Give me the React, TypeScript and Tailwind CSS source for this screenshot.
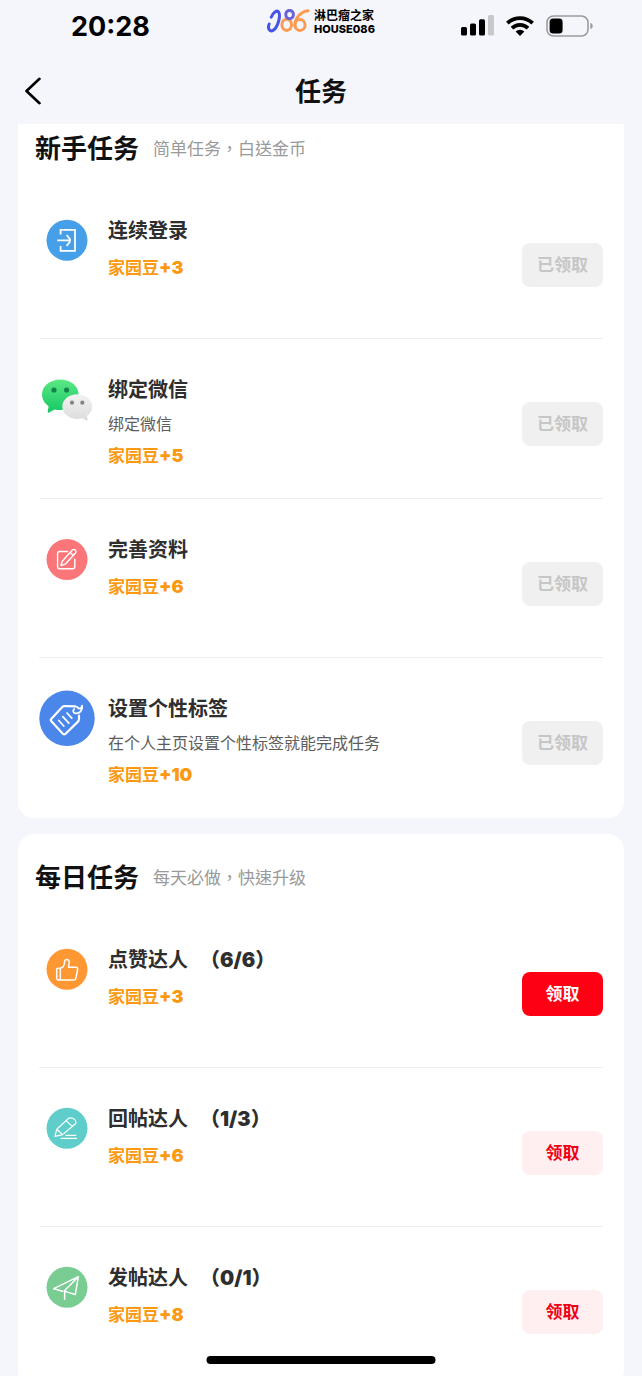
import type { ReactNode } from 'react';
import clsx from 'clsx';

type TaskStatus = 'claimed' | 'ready' | 'pending';

interface Task {
  id: string;
  title: string;
  progress?: string;
  desc?: string;
  reward: number;
  status: TaskStatus;
  icon: ReactNode;
}

const LoginIcon = () => (
  <svg viewBox="0 0 56 56" className="size-14 shrink-0" fill="none" stroke="#fff" strokeWidth="1.8" aria-hidden="true">
    <circle cx="28" cy="28.3" r="20.5" fill="#459fe9" stroke="none" />
    <path d="M21.6 22.6v-4.8H36V38.8H21.6V34" />
    <path d="M18.3 28.4H31M27.6 23l3 3.6q1.2 1.8 0 3.6l-3 3.6" />
  </svg>
);

const WechatIcon = () => (
  <svg viewBox="0 0 56 56" className="size-14 shrink-0" aria-hidden="true">
    <defs>
      <linearGradient id="wx-green" x1="0" y1="0" x2="0" y2="1">
        <stop offset="0" stopColor="#5be883" />
        <stop offset="1" stopColor="#16c765" />
      </linearGradient>
      <linearGradient id="wx-gray" x1="0" y1="0" x2="0" y2="1">
        <stop offset="0" stopColor="#f2f2f2" />
        <stop offset="1" stopColor="#dcdcdc" />
      </linearGradient>
    </defs>
    <path d="M21.3 8.6C11.2 8.6 3 15.2 3 23.6c0 4.8 2.5 8.8 6.6 11.7l-.9 5.3c-.1 1 .5 1.4 1.4.9l5.4-3.1c1.8.5 3.8.7 5.8.7 10.1 0 18.3-7.1 18.3-15.5S31.4 8.6 21.3 8.6z" fill="url(#wx-green)" />
    <circle cx="15" cy="19" r="2.6" fill="#11844a" />
    <circle cx="27.6" cy="19" r="2.6" fill="#11844a" />
    <path d="M38.3 23.2c-8.3 0-15 5.4-15 12.3s6.7 12.4 15 12.4c1.7 0 3.3-.2 4.8-.7l4.3 2.4c.8.4 1.3 0 1.2-.8l-.7-3.9c3.3-2.3 5.4-5.6 5.4-9.400 0-6.900-6.700-12.300-15-12.300z" fill="url(#wx-gray)" />
    <circle cx="33" cy="31.7" r="2.1" fill="#858585" />
    <circle cx="43.3" cy="31.7" r="2.1" fill="#858585" />
  </svg>
);

const EditIcon = () => (
  <svg viewBox="0 0 56 56" className="size-14 shrink-0" fill="none" stroke="#fff" strokeWidth="1.4" strokeLinecap="round" strokeLinejoin="round" aria-hidden="true">
    <circle cx="28" cy="28.5" r="20.5" fill="#fa7679" stroke="none" />
    <path d="M28.500 20.500H20.600a2 2 0 0 0-2 2v13.200a2 2 0 0 0 2 2h13.200a2 2 0 0 0 2-2v-7.500" />
    <path d="M23.200 30.200 33.400 19q1.400-1.200 2.900 0 1.400 1.500.2 3L26.200 33.200l-4.200 1.300zM31.200 21.400l3.200 3" />
  </svg>
);

const TagIcon = () => (
  <svg viewBox="0 0 56 56" className="size-14 shrink-0" fill="none" stroke="#fff" strokeWidth="2.2" strokeLinecap="round" strokeLinejoin="round" aria-hidden="true">
    <circle cx="28" cy="28.3" r="27.7" fill="#4b86ea" stroke="none" />
    <path d="M35.500 16.300 25.800 16q-1.500 0-2.500 1L12.400 28.700q-1.200 1.300 0 2.600l11.400 12.400q1.400 1.400 2.800 0L39 31.600q1-1 1-2.500v-3.600" />
    <path d="M35.500 16.300q3.300.2 4.200 2.300 3.300 0 3.400-3M43.100 15.600c.9 4.600-2.600 8.200-6.500 7.700-2.700-.4-3.200-3-1.200-4.200" strokeWidth="1.7" />
    <path d="m19.800 30.500 5 5.500M23.800 26.700l6 6.400M28 23l4.800 5.200" strokeWidth="1.7" />
  </svg>
);

const LikeIcon = () => (
  <svg viewBox="0 0 56 56" className="size-14 shrink-0" fill="none" stroke="#fff" strokeWidth="1.5" strokeLinejoin="round" aria-hidden="true">
    <circle cx="28" cy="28.3" r="20.5" fill="#ff9733" stroke="none" />
    <path d="M21.300 27.200h-2.200q-1.400 0-1.400 1.400v9q0 1.400 1.400 1.400h2.200zM21.300 27.200c3-.7 4.200-2.800 4.300-6.500 0-3 4.700-3.200 4.600.8 0 1.800-.5 3.200-.8 4.700h7.400q2.200.2 1.800 2.400l-1.700 8.500q-.4 1.900-2.300 1.900H21.300" />
  </svg>
);

const ReplyIcon = () => (
  <svg viewBox="0 0 56 56" className="size-14 shrink-0" fill="none" stroke="#fff" strokeWidth="1.2" strokeLinecap="round" strokeLinejoin="round" aria-hidden="true">
    <circle cx="28" cy="28.3" r="20.5" fill="#5fcdc9" stroke="none" />
    <path d="M16 36.300 17.800 29.200 29.200 18.600q3.500-2 6.200.8 2.600 2.500.8 4.600L23.600 34.600zM17.800 29.200l5.800 5.400M27 20.600l6.400 5.800" />
    <path d="M27 35.400h9.800M22 38.400h15.500" />
  </svg>
);

const PostIcon = () => (
  <svg viewBox="0 0 56 56" className="size-14 shrink-0" fill="none" stroke="#fff" strokeWidth="1.5" strokeLinecap="round" strokeLinejoin="round" aria-hidden="true">
    <circle cx="28" cy="28.3" r="20.5" fill="#79cc92" stroke="none" />
    <path d="M23.500 32.300 14.800 29.700 39.300 17.700 36.300 35.600 25.600 32.300v8M39.300 17.700 25.200 32" />
  </svg>
);

const noviceTasks: Task[] = [
  { id: 'login', title: '连续登录', reward: 3, status: 'claimed', icon: <LoginIcon /> },
  { id: 'wechat', title: '绑定微信', desc: '绑定微信', reward: 5, status: 'claimed', icon: <WechatIcon /> },
  { id: 'profile', title: '完善资料', reward: 6, status: 'claimed', icon: <EditIcon /> },
  { id: 'tags', title: '设置个性标签', desc: '在个人主页设置个性标签就能完成任务', reward: 10, status: 'claimed', icon: <TagIcon /> },
];

const dailyTasks: Task[] = [
  { id: 'like', title: '点赞达人', progress: '6/6', reward: 3, status: 'ready', icon: <LikeIcon /> },
  { id: 'reply', title: '回帖达人', progress: '1/3', reward: 6, status: 'pending', icon: <ReplyIcon /> },
  { id: 'post', title: '发帖达人', progress: '0/1', reward: 8, status: 'pending', icon: <PostIcon /> },
];

function StatusBar() {
  return (
    <div className="grid h-[58px] grid-cols-[1fr_auto_1fr] items-center pb-[6px]">
      <time className="pt-[2px] pl-[71px] text-[27px] leading-8 font-bold text-black">20:28</time>

      <div className="mb-2 flex items-center gap-1">
        <svg width="43" height="26" viewBox="0 0 43 26" fill="none" strokeWidth="3" strokeLinecap="round" aria-hidden="true">
          <path d="M4.200 8.200C6 3.500 10 .8 11.600 3c2.400 3.600-.8 15-5 18-3.800 2.600-6.400-1.600-4.400-6" stroke="#4653e6" />
          <ellipse cx="19.700" cy="15.800" rx="4.800" ry="5.600" stroke="#fb9a50" />
          <ellipse cx="22.600" cy="5.600" rx="3.800" ry="4.200" stroke="#6a62d8" />
          <path d="M41 1.800C34 2.600 27.900 9 27.900 16.200" stroke="#fb9a50" />
          <ellipse cx="33" cy="16" rx="5.100" ry="5.400" stroke="#fb9a50" />
        </svg>
        <div className="flex flex-col text-black">
          <span className="text-[12px] leading-[14px] font-bold">淋巴瘤之家</span>
          <span className="text-[11px] leading-[12px] font-extrabold">HOUSE086</span>
        </div>
      </div>

      <div className="flex items-center justify-end gap-3 pr-12">
        <svg width="33" height="22" viewBox="0 0 33 22" aria-hidden="true">
          <rect x="0" y="12" width="6" height="8.5" rx="1.6" />
          <rect x="9" y="8.5" width="6" height="12" rx="1.6" />
          <rect x="18" y="4.3" width="6" height="16.2" rx="1.6" />
          <rect x="27" y="0" width="6" height="20.5" rx="1.6" fill="#c7c8cb" />
        </svg>
        <svg width="28" height="22" viewBox="0 0 28 22" fill="none" stroke="#000" strokeWidth="3.8" aria-hidden="true">
          <path d="M1.400 8.200a18 18 0 0 1 25.200 0" />
          <path d="M6 13.200a11.400 11.400 0 0 1 16 0" />
          <path d="M14 21 9.600 16.600a6.400 6.400 0 0 1 8.800 0z" fill="#000" stroke="none" />
        </svg>
        <svg width="48" height="22" viewBox="0 0 48 22" aria-hidden="true">
          <rect x="1" y="1" width="41" height="20" rx="6.5" fill="none" stroke="#9b9ca0" strokeWidth="1.6" />
          <rect x="3.6" y="3.6" width="13" height="14.8" rx="3.5" />
          <path d="M44.300 7.800q2.500 1 2.500 3.200t-2.500 3.200z" fill="#9b9ca0" />
        </svg>
      </div>
    </div>
  );
}

function TaskRow({ task }: { task: Task }) {
  return (
    <li
      className={clsx(
        'flex items-start border-b border-[#efefef] pt-8 pb-[30px] last:border-b-0',
        task.desc ? 'min-h-40' : 'min-h-[159px]',
      )}
    >
      {task.icon}
      <div className="ml-[13px] min-w-0 flex-1 pt-[5px]">
        <h3 className="flex gap-3 text-xl leading-7 font-bold text-[#2e2e2e]">
          {task.title}
          {task.progress && <span className="font-black">（{task.progress}）</span>}
        </h3>
        {task.desc && <p className="mt-2 text-base leading-6 text-[#5c5c5c]">{task.desc}</p>}
        <p className={clsx('text-[17px] leading-6 font-bold text-[#fb9a12]', task.desc ? 'mt-2' : 'mt-[11px]')}>
          家园豆<span className="text-lg leading-6 font-black">+{task.reward}</span>
        </p>
      </div>
      <button
        type="button"
        disabled={task.status === 'claimed'}
        className={clsx(
          'mt-[31px] h-11 w-[81px] shrink-0 rounded-lg pt-[2px] text-[17px] font-bold',
          task.status === 'claimed' && 'bg-[#f0f0f0] text-[#c6c6c6]',
          task.status === 'ready' && 'bg-[#fe0014] text-white',
          task.status === 'pending' && 'bg-[#ffeff0] text-[#f00014]',
        )}
      >
        {task.status === 'claimed' ? '已领取' : '领取'}
      </button>
    </li>
  );
}

interface TaskCardProps {
  title: string;
  hint: string;
  tasks: Task[];
  className?: string;
}

function TaskCard({ title, hint, tasks, className }: TaskCardProps) {
  return (
    <section className={clsx('bg-white', className)}>
      <div className="flex items-center gap-[14px] px-[17px] pb-[15px]">
        <h2 className="text-[26px] leading-8 font-bold text-[#111]">{title}</h2>
        <p className="font-['Inter','Noto_Sans_CJK_TC',sans-serif] text-[17px] leading-6 text-[#999]">{hint}</p>
      </div>
      <ul className="px-[21px]">
        {tasks.map((task) => (
          <TaskRow key={task.id} task={task} />
        ))}
      </ul>
    </section>
  );
}

export default function App() {
  return (
    <div className="relative flex h-screen flex-col overflow-hidden bg-[#f5f6fb] font-['Inter','Noto_Sans_CJK_SC',sans-serif]">
      <header className="shrink-0">
        <StatusBar />
        <div className="grid h-[66px] grid-cols-[1fr_auto_1fr] items-center px-6">
          <button type="button" aria-label="返回" className="justify-self-start">
            <svg width="18" height="28" viewBox="0 0 18 28" fill="none" stroke="#000" strokeWidth="2.6" strokeLinecap="round" strokeLinejoin="round" aria-hidden="true">
              <path d="M15.500 1.800 2.500 14l13 12.200" />
            </svg>
          </button>
          <h1 className="pt-[2px] text-[26px] leading-8 font-bold text-[#111]">任务</h1>
        </div>
      </header>

      <main className="flex-1 overflow-y-auto px-[18px] [scrollbar-width:none]">
        <TaskCard title="新手任务" hint="简单任务，白送金币" tasks={noviceTasks} className="rounded-b-2xl pt-[9px]" />
        <TaskCard title="每日任务" hint="每天必做，快速升级" tasks={dailyTasks} className="mt-4 rounded-2xl pt-7" />
      </main>

      <div className="absolute bottom-3 left-1/2 h-2 w-[229px] -translate-x-1/2 rounded-full bg-black" />
    </div>
  );
}
